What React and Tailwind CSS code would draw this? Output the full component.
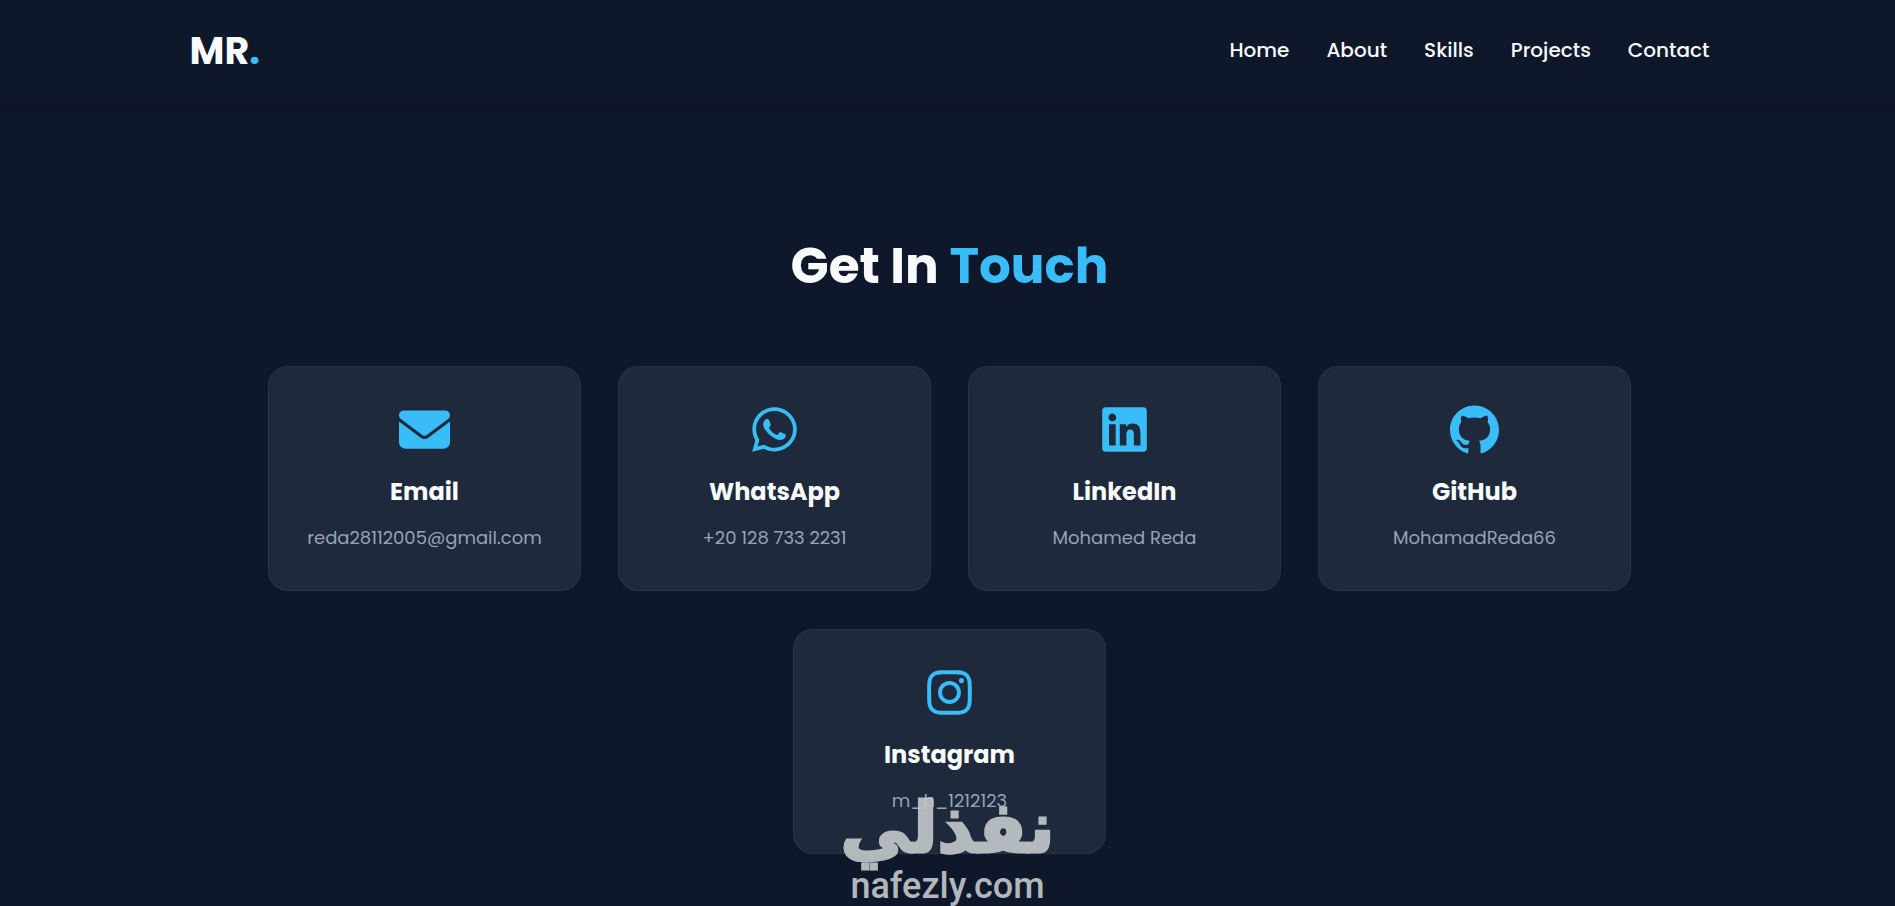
import { FaEnvelope, FaWhatsapp, FaLinkedin, FaInstagram } from 'react-icons/fa6';
import { SiGithub } from 'react-icons/si';

const links = ['Home', 'About', 'Skills', 'Projects', 'Contact'];

const contacts = [
  { title: 'Email', value: 'reda28112005@gmail.com', href: 'mailto:reda28112005@gmail.com', icon: <FaEnvelope className="size-[51px]" /> },
  { title: 'WhatsApp', value: '+20 128 733 2231', href: '#whatsapp', icon: <FaWhatsapp className="size-[51px]" /> },
  { title: 'LinkedIn', value: 'Mohamed Reda', href: '#linkedin', icon: <FaLinkedin className="size-[51px]" /> },
  { title: 'GitHub', value: 'MohamadReda66', href: '#github', icon: <SiGithub className="size-[49px]" /> },
  { title: 'Instagram', value: 'm_h_1212123', href: '#instagram', icon: <FaInstagram className="size-[51px]" /> },
];

const Navbar = () => (
  <header className="pl-1 shadow-[0_4px_10px_rgba(0,0,0,0.2)]">
    <div className="max-w-[1520px] mx-auto h-26 pb-1 flex items-center justify-between">
      <a href="#home" className="text-[38px] font-bold">
        MR<span className="text-[#38bdf8]">.</span>
      </a>
      <nav className="flex gap-[37px] text-xl font-medium">
        {links.map((link) => (
          <a key={link} href={'#' + link.toLowerCase()} className="hover:text-[#38bdf8]">
            {link}
          </a>
        ))}
      </nav>
    </div>
  </header>
);

const ContactCard = ({ title, value, href, icon }) => (
  <a
    href={href}
    className="w-[313px] px-6 pt-[37px] pb-[38px] flex flex-col items-center rounded-[20px] bg-[#1e293b] border border-white/5"
  >
    <div className="h-[51px] flex items-center text-[#38bdf8]">{icon}</div>
    <h3 className="mt-5 text-2xl leading-[34px] font-bold">{title}</h3>
    <p className="mt-[15px] text-lg text-[#94a3b8]">{value}</p>
  </a>
);

const Contact = () => (
  <section id="contact" className="pl-1 pt-[130px]">
    <div className="max-w-[1520px] mx-auto">
      <h2 className="text-[50px] leading-[64px] font-bold text-center">
        Get In <span className="text-[#38bdf8]">Touch</span>
      </h2>
      <div className="mt-[68px] flex flex-wrap justify-center gap-x-[37px] gap-y-[38px]">
        {contacts.map((contact) => (
          <ContactCard key={contact.title} {...contact} />
        ))}
      </div>
    </div>
  </section>
);

const Watermark = () => (
  <div className="absolute bottom-0 left-1/2 -translate-x-1/2 flex flex-col items-center text-[#c4c9ca] opacity-90 pointer-events-none">
    <span
      lang="ar"
      dir="rtl"
      className="text-[70px] leading-[76px] font-bold font-['DejaVu_Sans',sans-serif] [-webkit-text-stroke:3px_#c4c9ca] [stroke-linejoin:round]"
    >
      نفذلي
    </span>
    <span className="text-[36px] leading-[40px] font-medium font-['Roboto',sans-serif]">nafezly.com</span>
  </div>
);

export default function App() {
  return (
    <div className="relative min-h-screen overflow-hidden bg-[#0f172a] text-[#f8fafc] font-['Poppins','Inter',sans-serif]">
      <Navbar />
      <Contact />
      <Watermark />
    </div>
  );
}
